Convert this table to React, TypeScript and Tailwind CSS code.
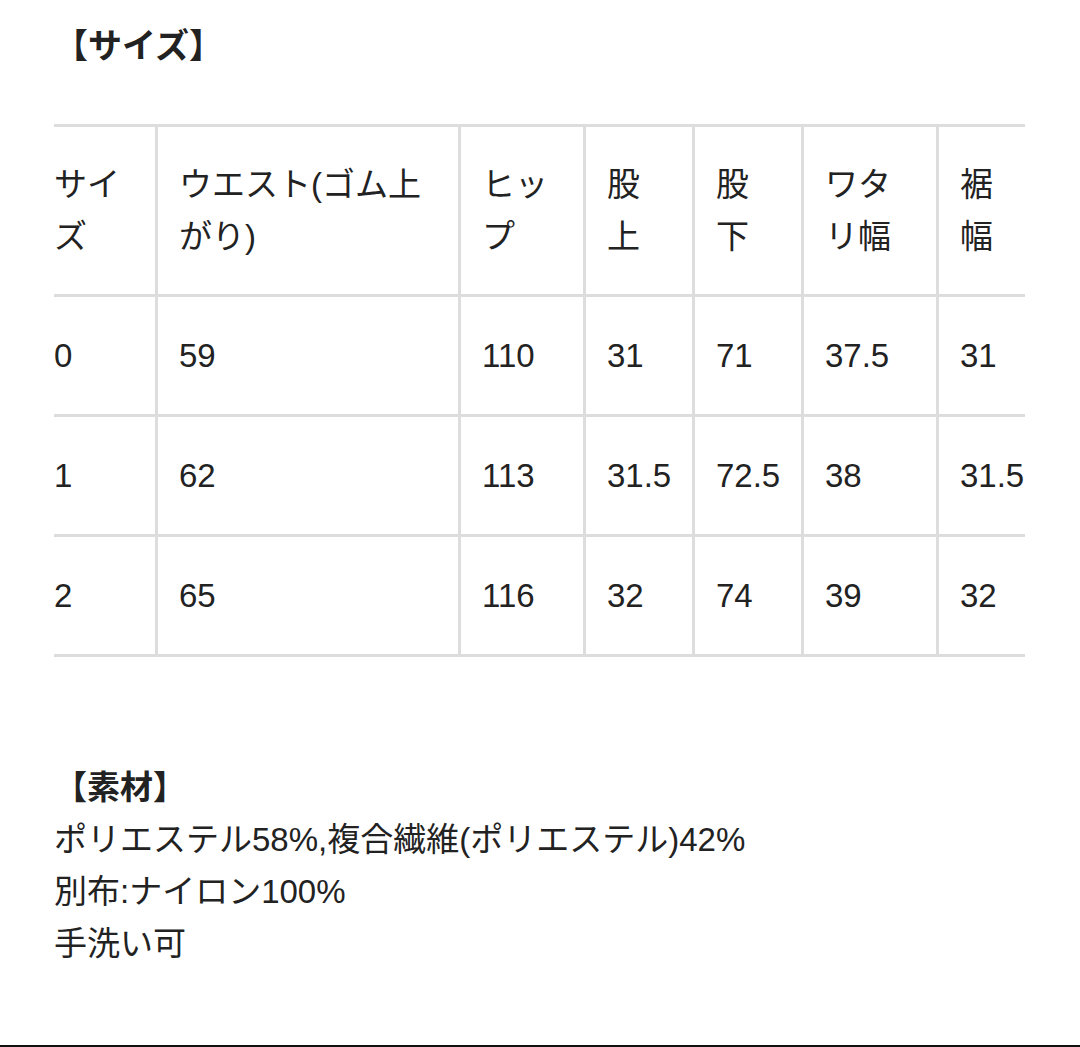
const font = { fontFamily: '"Liberation Sans", "Noto Sans CJK JP", sans-serif' };

type Cell = { w: string; pad: string; border: boolean };

const cols: Cell[] = [
  { w: 'w-[104px]', pad: 'pl-0', border: true },
  { w: 'w-[303px]', pad: 'pl-[21px]', border: true },
  { w: 'w-[125px]', pad: 'pl-[21px]', border: true },
  { w: 'w-[109px]', pad: 'pl-[21px]', border: true },
  { w: 'w-[109px]', pad: 'pl-[21px]', border: true },
  { w: 'w-[135px]', pad: 'pl-[21px]', border: true },
  { w: 'flex-1', pad: 'pl-[21px]', border: false },
];

const header: string[][] = [
  ['サイ', 'ズ'],
  ['ウエスト(ゴム上', 'がり)'],
  ['ヒッ', 'プ'],
  ['股', '上'],
  ['股', '下'],
  ['ワタ', 'リ幅'],
  ['裾', '幅'],
];

const rows: string[][] = [
  ['0', '59', '110', '31', '71', '37.5', '31'],
  ['1', '62', '113', '31.5', '72.5', '38', '31.5'],
  ['2', '65', '116', '32', '74', '39', '32'],
];

const Row = ({ children, h }: { children: React.ReactNode; h: string }) => (
  <div className={`flex border-b-[3px] border-[#dddddd] ${h}`}>{children}</div>
);

export default function App() {
  return (
    <div className="min-h-[1047px] bg-white text-[#222222] flex flex-col" style={font}>
      <div className="pl-[54px] pt-[20px]">
        <h2 className="text-[34px] leading-[52px] font-bold">【サイズ】</h2>

        <div className="mt-[52px] w-[971px] overflow-hidden border-t-[3px] border-[#dddddd] text-[33px] leading-[52px]">
          <Row h="h-[170px]">
            {header.map((lines, i) => (
              <div
                key={i}
                className={`${cols[i].w} ${cols[i].pad} flex flex-col justify-center ${cols[i].border ? 'border-r-[3px] border-[#dddddd]' : ''}`}
              >
                {lines.map((l) => (
                  <span key={l} className="whitespace-nowrap">{l}</span>
                ))}
              </div>
            ))}
          </Row>
          {rows.map((r, ri) => (
            <Row key={ri} h="h-[120px]">
              {r.map((v, i) => (
                <div
                  key={i}
                  className={`${cols[i].w} ${cols[i].pad} flex items-center whitespace-nowrap ${cols[i].border ? 'border-r-[3px] border-[#dddddd]' : ''}`}
                >
                  {v}
                </div>
              ))}
            </Row>
          ))}
        </div>

        <div className="mt-[105px] text-[33px] leading-[52px]">
          <h3 className="font-bold">【素材】</h3>
          <p>ポリエステル58%,複合繊維(ポリエステル)42%</p>
          <p>別布:ナイロン100%</p>
          <p>手洗い可</p>
        </div>
      </div>
      <div className="flex-1" />
      <div className="h-[2px] bg-[#111111]" />
    </div>
  );
}
